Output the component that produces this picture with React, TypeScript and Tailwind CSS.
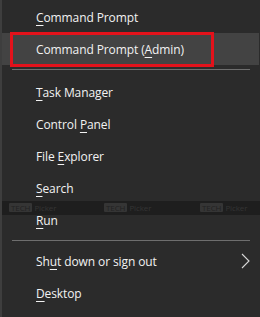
import React from "react";

type Item = { pre: string; key: string; post: string; chevron?: boolean };

function Label({ item }: { item: Item }) {
  return (
    <span className="leading-[13px]">
      {item.pre}
      <span className="underline decoration-1 underline-offset-[3px]">{item.key}</span>
      {item.post}
    </span>
  );
}

function Row({ item, hot }: { item: Item; hot?: boolean }) {
  return (
    <div
      className={`relative flex h-8 items-center pl-[34px] pr-[10px] ${hot ? "bg-[#434343]" : ""}`}
    >
      <Label item={item} />
      {item.chevron && (
        <svg className="ml-auto" width="9" height="16" viewBox="0 0 9 16" fill="none">
          <path d="M1 1 L8 8 L1 15" stroke="#d8d8d8" strokeWidth="1.1" />
        </svg>
      )}
    </div>
  );
}

function Sep() {
  return <div className="mx-[10px] my-[4px] h-px bg-[#6e6e6e]" />;
}

function Watermark() {
  const spots = [7, 102, 198];
  return (
    <div className="pointer-events-none absolute left-0 right-0 top-[201px] h-[14px] bg-[#000]/30">
      {spots.map((x) => (
        <div
          key={x}
          className="absolute top-[2px] flex items-center gap-[2px] text-[8px] leading-[9px] text-[#353535]"
          style={{ left: x }}
        >
          <span className="rounded-[1px] bg-[#353535] px-[2px] text-[#222]">TECH</span>
          <span>Picker</span>
        </div>
      ))}
    </div>
  );
}

export default function App() {
  const top: Item[] = [{ pre: "", key: "C", post: "ommand Prompt" }];
  const mid: Item[] = [
    { pre: "", key: "T", post: "ask Manager" },
    { pre: "Control ", key: "P", post: "anel" },
    { pre: "File ", key: "E", post: "xplorer" },
    { pre: "", key: "S", post: "earch" },
    { pre: "", key: "R", post: "un" },
  ];
  const bottom: Item[] = [
    { pre: "Sh", key: "u", post: "t down or sign out", chevron: true },
    { pre: "", key: "D", post: "esktop" },
  ];
  return (
    <div
      className="relative h-[317px] w-[260px] overflow-hidden border-l-2 border-[#3e3e3e] bg-[#2b2b2b] text-[12px] tracking-[-0.1px] text-[#f2f2f2]"
      style={{ fontFamily: '"Open Sans", "Noto Sans", sans-serif' }}
    >
      <div className="pt-px">
        {top.map((i) => (
          <Row key={i.key} item={i} />
        ))}
        <div className="relative ml-[2px] mr-[1px]">
          <div className="-ml-[2px]">
            <Row item={{ pre: "Command Prompt (", key: "A", post: "dmin)" }} hot />
          </div>
          <div className="pointer-events-none absolute -top-px left-[6px] h-[35px] w-[204px] border-[3px] border-[#e3121b]" />
        </div>
        <Sep />
        <div className="pt-[2px]">
          {mid.map((i) => (
            <Row key={i.key} item={i} />
          ))}
        </div>
        <Sep />
        {bottom.map((i) => (
          <Row key={i.key} item={i} />
        ))}
      </div>
      <Watermark />
    </div>
  );
}
